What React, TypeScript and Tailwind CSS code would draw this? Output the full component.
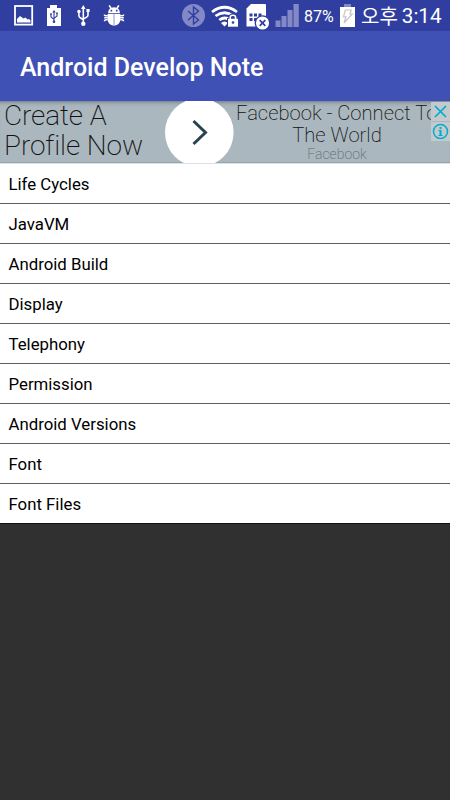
import React from "react";

const topics = [
  "Life Cycles",
  "JavaVM",
  "Android Build",
  "Display",
  "Telephony",
  "Permission",
  "Android Versions",
  "Font",
  "Font Files",
];

function StatusBar() {
  return (
    <header className="flex h-[31px] items-center bg-[#303f9f] pl-[14px] text-white">
      <svg className="h-[31px] w-5 shrink-0" viewBox="14 0 20 31">
        <rect x="15" y="6" width="17.2" height="18.6" fill="none" stroke="#fff" strokeWidth="1.8" />
        <path d="M17 22.5V19l3-3 3.5 2.5 2-1 2 2 1.5-.5 1.5 1.5v2z" fill="#fff" />
      </svg>
      <svg className="ml-3 h-[31px] w-4 shrink-0" viewBox="46 0 16 31">
        <path d="M50 5h7v3h4v18H47V8h3z" fill="#fff" />
        <path d="M54 11v11M51 14v3l3 2.4M57 13v3l-3 2.4" fill="none" stroke="#303f9f" strokeWidth="1.1" />
        <path d="M52.3 12.5 54 10l1.7 2.5z" fill="#303f9f" />
        <circle cx="54" cy="21.8" r="1.3" fill="#303f9f" />
        <path d="M50.2 13.2h1.6v1.6h-1.6zM56.2 12.4h1.6V14h-1.6z" fill="#303f9f" />
      </svg>
      <svg className="ml-[14px] h-[31px] w-4 shrink-0" viewBox="76 0 16 31">
        <path d="M83.3 8v16M78.9 12v3.5q0 1.5 1.4 2.3l3 2M88 11v4q0 1.4-1.4 2.1l-3.3 2" fill="none" stroke="#fff" strokeWidth="1.6" />
        <path d="m81 9 2.3-4 2.3 4z" fill="#fff" />
        <circle cx="78.9" cy="11.5" r="1.7" fill="#fff" />
        <path d="M86.4 9h3.2v3h-3.2z" fill="#fff" />
        <circle cx="83.3" cy="23.7" r="2.2" fill="#fff" />
      </svg>
      <svg className="ml-[11px] h-[31px] w-[22px] shrink-0" viewBox="103 0 22 31">
        <path d="m109.2 5.3 2 3.4M118.8 5.3l-2 3.4" stroke="#fff" strokeWidth="1.6" />
        <path d="M108 13.2q.3-5.8 6-6 5.7.2 6 6z" fill="#fff" />
        <path d="M107.6 14h12.8v5q-.3 6-6.4 6.8-6.1-.8-6.4-6.8z" fill="#fff" />
        <path d="M107.8 15.8h-2.4q-1 0-1-1.2M107.8 17.8h-3.6M107.8 19.8h-2.2q-1.1.2-1.1 1.4M120.2 15.8h2.4q1 0 1-1.2M120.2 17.8h3.6M120.2 19.8h2.2q1.1.2 1.1 1.4" fill="none" stroke="#fff" strokeWidth="1.6" />
        <path d="M114 14v11.5" stroke="#8f97cc" strokeWidth="1" />
        <path d="M110.6 9.8h1.6v1.6h-1.6zM115.9 9.8h1.6v1.6h-1.6z" fill="#303f9f" />
      </svg>
      <svg className="ml-[57px] h-[31px] w-6 shrink-0" viewBox="182 0 24 31">
        <circle cx="193.5" cy="15.5" r="11.5" fill="#8289c5" />
        <path d="m188 11 10.5 9-5 4V7l5 4L188 20" fill="none" stroke="#303f9f" strokeWidth="1.4" />
      </svg>
      <svg className="ml-[5px] h-[31px] w-[29px] shrink-0" viewBox="211 0 29 31">
        <path d="M212 12q12.5-9.5 25 0M215.5 16q9-6.5 18 0M219.3 20q5.5-4 11 0" fill="none" stroke="#fff" strokeWidth="2.7" />
        <path d="M221 23q3.5-3 7 0l-3.5 3.5z" fill="#fff" />
        <path d="M227 18h1.4q-.3-4.6 4.4-4.6t4.5 4.6h1.7v9.5h-12z" fill="#303f9f" />
        <path d="M230.2 19.5v-2q0-2.2 2.7-2.2t2.7 2.2v2" fill="none" stroke="#fff" strokeWidth="1.6" />
        <path d="M228 18.8h10v7.9h-10z" fill="#fff" />
        <circle cx="233" cy="22.5" r="1.3" fill="#303f9f" />
      </svg>
      <svg className="ml-[6px] h-[31px] w-6 shrink-0" viewBox="246 0 24 31">
        <path d="M246.5 8.5 251 4h14q1 0 1 1v21.5h-19.5z" fill="#fff" />
        <path d="M249.5 13.5h3v3h-3zm4.5 0h3v3h-3zm4.5 0h3v3h-3zm-9 4.5h3v3h-3zm4.5 0h3v3h-3z" fill="#303f9f" />
        <circle cx="262.5" cy="23" r="7.2" fill="#fff" stroke="#303f9f" strokeWidth="1.3" />
        <path d="m259.7 20.2 5.6 5.6m0-5.6-5.6 5.6" stroke="#303f9f" strokeWidth="1.7" />
      </svg>
      <svg className="ml-[5px] h-[31px] w-6 shrink-0" viewBox="275 0 24 31">
        <path d="M275.5 20.5h5V27h-5zM281.5 16h5v11h-5zM287.5 10h5v17h-5zM293.5 4h5.3v23h-5.3z" fill="#8289c5" />
      </svg>
      <span className="ml-[5px] w-[35px] whitespace-nowrap pt-[2px] text-[16px] leading-[29px]">87%</span>
      <svg className="ml-px h-[31px] w-4 shrink-0" viewBox="340 0 16 31">
        <path d="M340 7h15v20h-15z" fill="#fff" />
        <path d="M344 4h7v3h-7z" fill="#8289c5" />
        <path d="M345.3 10h6l-1.4 4h2.4l-8.3 9 2-6.2h-2.5z" fill="none" stroke="#c5c5c5" strokeWidth="1.2" />
      </svg>
      <span className="ml-[5px] whitespace-nowrap font-['Noto_Sans_CJK_KR',sans-serif] text-[20px] leading-[31px]">오후</span>
      <span className="ml-[4px] whitespace-nowrap pt-px text-[20.6px] leading-[30px]">3:14</span>
    </header>
  );
}

function AdBanner() {
  return (
    <section className="relative flex h-[62px] overflow-hidden bg-[#abb7be] text-[#101010] shadow-[inset_0_5px_4px_-4px_#68747b,inset_0_-1px_0_#98a5ac]">
      <div className="w-[165px] shrink-0 whitespace-nowrap pl-1 text-[28px] font-extralight leading-[30px] tracking-[-0.1px]">
        <p>Create A</p>
        <p>Profile Now</p>
      </div>
      <svg className="h-[62px] w-[69px] shrink-0" viewBox="165 101 69 62">
        <circle cx="199.3" cy="132.5" r="34.3" fill="#fff" />
        <path d="m193.5 121 12 11.5-12 11.5" fill="none" stroke="#29424f" strokeWidth="3" />
      </svg>
      <div className="w-[204px] shrink-0 whitespace-nowrap pl-[2px] pt-px text-center text-[20.2px] font-extralight leading-[22px]">
        <p className="text-left">Facebook - Connect To</p>
        <p>The World</p>
        <p className="text-[14px] leading-[16px] text-[#5f6a70]">Facebook</p>
      </div>
      <div className="absolute right-0 top-px flex w-[19px] flex-col gap-px">
        <svg className="h-[19px] w-[19px] bg-[#c4c9cc]" viewBox="0 0 19 19">
          <path d="m4 4 11 11m0-11L4 15" stroke="#00adce" strokeWidth="1.7" />
        </svg>
        <svg className="h-[19px] w-[19px] bg-[#c4c9cc]" viewBox="0 0 19 19">
          <circle cx="9.5" cy="9.5" r="7" fill="none" stroke="#00adce" strokeWidth="1.5" />
          <path d="M8.5 5h2v2h-2zm-1 3h3v5h1v1h-4v-1h1V9h-1z" fill="#00adce" />
        </svg>
      </div>
    </section>
  );
}

export default function App() {
  return (
    <main className="h-[800px] w-[450px] overflow-hidden bg-[#303030] font-['Roboto',sans-serif]">
      <StatusBar />
      <div className="flex h-[70px] items-center bg-[#3f51b5] pl-5 pt-1 text-white">
        <h1 className="whitespace-nowrap text-[25px] font-medium">Android Develop Note</h1>
      </div>
      <AdBanner />
      <ul className="border-t border-[#dce0e2] bg-white">
        {topics.map((topic) => (
          <li key={topic} className="flex h-10 items-center border-b border-[#606060] pl-[8.5px] pt-[3px] text-[16.8px] text-black last:border-[#101010]">
            {topic}
          </li>
        ))}
      </ul>
    </main>
  );
}
